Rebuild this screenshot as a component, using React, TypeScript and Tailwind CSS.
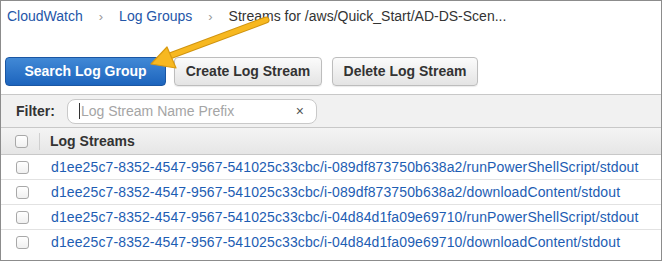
import React from 'react';

const streams = [
  'd1ee25c7-8352-4547-9567-541025c33cbc/i-089df873750b638a2/runPowerShellScript/stdout',
  'd1ee25c7-8352-4547-9567-541025c33cbc/i-089df873750b638a2/downloadContent/stdout',
  'd1ee25c7-8352-4547-9567-541025c33cbc/i-04d84d1fa09e69710/runPowerShellScript/stdout',
  'd1ee25c7-8352-4547-9567-541025c33cbc/i-04d84d1fa09e69710/downloadContent/stdout',
];

function Checkbox() {
  return (
    <span className="block w-[13px] h-[13px] rounded-[3px] border border-[#a8a8a8] bg-gradient-to-b from-white to-[#f0f0f0]" />
  );
}

function GrayButton({ label, width }: { label: string; width: string }) {
  return (
    <button className={`${width} h-[29px] rounded-[4px] border border-[#bdbdbd] bg-gradient-to-b from-[#fbfbfb] to-[#e4e4e4] text-[14px] font-bold text-[#333] shadow-[0_1px_1px_rgba(0,0,0,0.08)]`}>
      {label}
    </button>
  );
}

export default function App() {
  return (
    <div
      className="relative w-[662px] h-[261px] border border-[#8c8c8c] bg-white overflow-hidden"
      style={{ fontFamily: '"Liberation Sans", Arial, sans-serif' }}
    >
      {/* breadcrumb */}
      <div className="flex items-center h-[31px] pl-[6px] text-[14px]">
        <span className="text-[#2456a8]">CloudWatch</span>
        <span className="mx-[16px] text-[#9a9a9a] text-[13px]">›</span>
        <span className="text-[#2456a8]">Log Groups</span>
        <span className="mx-[16px] text-[#9a9a9a] text-[13px]">›</span>
        <span className="text-[#333]">Streams for /aws/Quick_Start/AD-DS-Scen...</span>
      </div>

      {/* buttons */}
      <div className="flex items-center pl-[4px] mt-[25px]">
        <button className="w-[161px] h-[29px] rounded-[4px] border border-[#1a56a3] bg-gradient-to-b from-[#4189d6] to-[#1c64bd] text-[14px] font-bold text-white">
          Search Log Group
        </button>
        <div className="w-[8px]" />
        <GrayButton label="Create Log Stream" width="w-[148px]" />
        <div className="w-[10px]" />
        <GrayButton label="Delete Log Stream" width="w-[146px]" />
      </div>

      {/* filter */}
      <div className="mt-[8px] border-t border-[#c8c8c8] bg-[#f1f1f1] h-[33px] flex items-center pl-[15px]">
        <span className="text-[14px] font-bold text-[#333]">Filter:</span>
        <div className="ml-[12px] w-[250px] h-[25px] rounded-[8px] border border-[#c9c9c9] bg-white flex items-center pl-[11px] pr-[12px]">
          <span className="w-px h-[16px] bg-[#333] mr-[1px]" />
          <span className="flex-1 text-[14px] text-[#a5a5a5]">Log Stream Name Prefix</span>
          <span className="text-[14px] text-[#555]">×</span>
        </div>
      </div>

      {/* header */}
      <div className="border-t border-[#c8c8c8] h-[28px] flex items-center bg-gradient-to-b from-[#f4f4f4] to-[#e6e6e6] border-b">
        <div className="w-[39px] flex justify-center pl-[3px] border-r border-[#cfcfcf] h-[17px] items-center">
          <Checkbox />
        </div>
        <span className="pl-[10px] text-[14px] font-bold text-[#333]">Log Streams</span>
      </div>

      {/* rows */}
      {streams.map((s, i) => (
        <div key={i} className={`h-[25px] flex items-center ${i < streams.length - 1 ? 'border-b border-[#e2e2e2]' : ''}`}>
          <div className="w-[39px] flex justify-center pl-[3px]">
            <Checkbox />
          </div>
          <span className="pl-[11px] text-[14px] tracking-[0.12px] text-[#1d5db3] whitespace-nowrap">{s}</span>
        </div>
      ))}

      {/* annotation arrow */}
      <svg className="absolute left-0 top-0 pointer-events-none" width="662" height="261">
        <line x1="265" y1="19" x2="166" y2="56" stroke="#cf930f" strokeWidth="7" strokeLinecap="round" />
        <line x1="265" y1="19" x2="166" y2="56" stroke="#f7b820" strokeWidth="5" strokeLinecap="round" />
        <polygon points="150,63 166,46 175,67" fill="#f7b820" stroke="#d99a10" strokeWidth="1.2" strokeLinejoin="round" />
      </svg>
    </div>
  );
}
